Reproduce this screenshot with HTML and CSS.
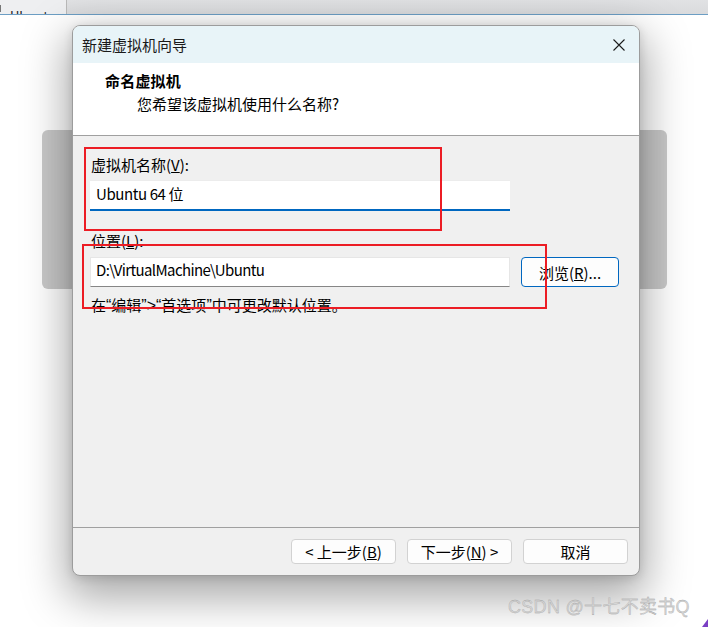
FILE: index.html
```html
<!DOCTYPE html>
<html lang="zh-CN">
<head>
<meta charset="utf-8">
<title>新建虚拟机向导</title>
<link rel="stylesheet" href="styles.css">
</head>
<body>
<div class="screen">
  <div class="tabbar">
    <div class="tab">
      <span class="tab-icon"></span>
      <span class="tab-text">Ubuntu</span>
      <span class="tab-close">✕</span>
    </div>
  </div>
  <div class="page">
    <div class="backpanel"></div>

    <div class="dialog">
      <div class="titlebar">
        <span class="title">新建虚拟机向导</span>
        <span class="close">
          <svg width="12" height="12" viewBox="0 0 12 12"><path d="M0.5 0.5 L11.5 11.5 M11.5 0.5 L0.5 11.5" stroke="#1b1b1b" stroke-width="1.1" fill="none"/></svg>
        </span>
      </div>
      <div class="header">
        <div class="heading">命名虚拟机</div>
        <div class="subtitle">您希望该虚拟机使用什么名称?</div>
      </div>
      <div class="body">
        <div class="label">虚拟机名称(<u>V</u>):</div>
        <div class="input input-focus">Ubuntu 64 位</div>
        <div class="label label-loc">位置(<u>L</u>):</div>
        <div class="row">
          <div class="input input-plain">D:\VirtualMachine\Ubuntu</div>
          <div class="browse">浏览(<u>R</u>)...</div>
        </div>
        <div class="hint">在<span class="q">“</span>编辑<span class="q">”&gt;“</span>首选项<span class="q">”</span>中可更改默认位置。</div>

        <div class="mark mark-name"></div>
        <div class="mark mark-loc"></div>
      </div>
      <div class="footer">
        <div class="btn">&lt; 上一步(<u>B</u>)</div>
        <div class="btn">下一步(<u>N</u>) &gt;</div>
        <div class="btn">取消</div>
      </div>
    </div>

    <div class="watermark">CSDN @十七不卖书Q</div>
    <div class="corner"></div>
  </div>
</div>
</body>
</html>
```
FILE: styles.css
```css
html, body {
  margin: 0;
  padding: 0;
  background: #ffffff;
}

.screen {
  width: 708px;
  height: 627px;
  overflow: hidden;
  display: flex;
  flex-direction: column;
  font-family: "Noto Sans CJK SC", sans-serif;
  font-size: 15px;
  color: #000;
}

.tabbar {
  height: 14px;
  flex: none;
  background: linear-gradient(#e1e2e4, #dadbdd);
  border-bottom: 1px solid #6c9ec4;
  display: flex;
  overflow: hidden;
}

.tab {
  width: 66px;
  height: 14px;
  background: #eeeff1;
  border-right: 1px solid #b9b9b9;
  display: flex;
  align-items: flex-end;
  overflow: hidden;
  font-size: 13px;
  line-height: 16px;
  color: #222;
}

.tab-icon {
  width: 3px;
  height: 6px;
  border: 1px solid #777;
  border-left: none;
  border-top: none;
  margin-bottom: 2px;
}

.tab-text {
  margin-left: 9px;
  margin-bottom: -10px;
}

.tab-close {
  margin-left: auto;
  margin-right: 5px;
  margin-bottom: -10px;
  font-size: 11px;
  color: #b0b0b0;
}

.page {
  flex: 1;
  position: relative;
  background: #ffffff;
}

.backpanel {
  position: absolute;
  left: 42px;
  top: 115px;
  width: 625px;
  height: 159px;
  background: #c9c9c9;
  border-radius: 6px;
}

.dialog {
  position: absolute;
  left: 72px;
  top: 10px;
  width: 566px;
  height: 549px;
  border: 1px solid #9c9c9c;
  border-radius: 8px;
  background: #f0f0f0;
  overflow: hidden;
  display: flex;
  flex-direction: column;
  box-shadow: 0 16px 44px 6px rgba(0, 0, 0, 0.34), 0 2px 10px rgba(0, 0, 0, 0.12);
}

.titlebar {
  height: 37px;
  flex: none;
  background: #e8f4f8;
  display: flex;
  align-items: center;
  padding-left: 9px;
  padding-right: 14px;
}

.title {
  line-height: 20px;
  color: #1a1a1a;
}

.close {
  margin-left: auto;
  display: flex;
  margin-top: 1px;
}

.header {
  height: 72px;
  flex: none;
  background: #ffffff;
  border-bottom: 1px solid #a0a0a0;
  padding-left: 32px;
}

.heading {
  font-weight: bold;
  line-height: 20px;
  margin-top: 8px;
  letter-spacing: 0.2px;
}

.subtitle {
  line-height: 20px;
  margin-top: 3px;
  margin-left: 32px;
}

.body {
  flex: 1;
  position: relative;
  padding: 19px 0 0 17px;
  display: flex;
  flex-direction: column;
  align-items: flex-start;
}

.label {
  line-height: 20px;
  margin-left: 1px;
}

.label-loc {
  margin-top: 20px;
}

.input {
  width: 420px;
  box-sizing: border-box;
  background: #ffffff;
  display: flex;
  align-items: center;
  line-height: 20px;
}

.input-focus {
  margin-top: 5px;
  height: 31px;
  padding: 0 0 3px 6px;
  letter-spacing: -0.4px;
  border-top: 1px solid #ececec;
  border-bottom: 2px solid #0067c0;
}

.input-plain {
  height: 30px;
  padding-left: 5px;
  padding-bottom: 4px;
  letter-spacing: -0.6px;
  border: 1px solid #e6e6e6;
  border-bottom: 1px solid #868686;
}

.row {
  display: flex;
  gap: 11px;
  margin-top: 6px;
}

.browse {
  width: 98px;
  height: 30px;
  box-sizing: border-box;
  border: 1px solid #0067c0;
  border-radius: 4px;
  background: #fdfdfd;
  display: flex;
  align-items: center;
  justify-content: center;
}

.hint {
  line-height: 20px;
  margin-top: 8px;
  margin-left: 1px;
}

.q {
  font-family: "Liberation Sans", sans-serif;
  font-size: 16px;
}

.mark {
  position: absolute;
  border: 2px solid #ec1c24;
}

.mark-name {
  left: 11px;
  top: 11px;
  width: 354px;
  height: 80px;
}

.mark-loc {
  left: 9px;
  top: 108px;
  width: 461px;
  height: 61px;
}

.footer {
  height: 48px;
  flex: none;
  box-sizing: border-box;
  border-top: 1px solid #a0a0a0;
  display: flex;
  justify-content: flex-end;
  align-items: flex-start;
  padding: 11px 11px 0 0;
  gap: 11px;
}

.btn {
  width: 105px;
  height: 25px;
  box-sizing: border-box;
  border: 1px solid #d2d2d2;
  border-radius: 4px;
  background: #fdfdfd;
  display: flex;
  align-items: center;
  justify-content: center;
  line-height: 20px;
}

.watermark {
  position: absolute;
  left: 508px;
  top: 580px;
  font-size: 18px;
  line-height: 24px;
  color: #d6d6d6;
  letter-spacing: 0.3px;
  font-family: "Liberation Sans", "Noto Sans CJK SC", sans-serif;
  -webkit-text-stroke: 0.3px #a0a0a0;
}

.corner {
  position: absolute;
  right: 0;
  bottom: 0;
  width: 0;
  height: 0;
  border-left: 6px solid transparent;
  border-bottom: 8px solid #7b3fc4;
}
```
